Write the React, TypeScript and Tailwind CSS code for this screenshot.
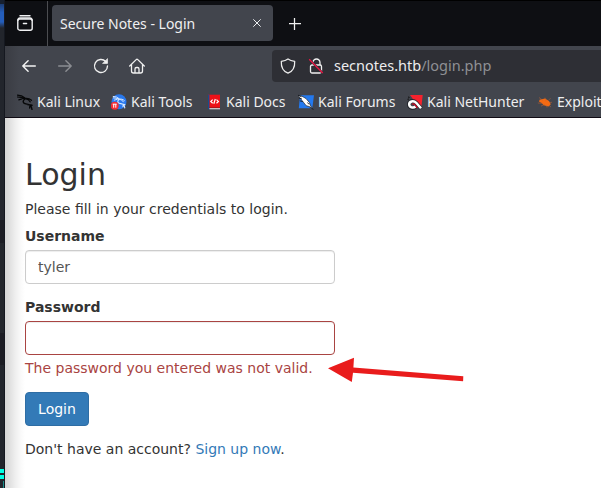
import type { ReactNode } from 'react';

function Dragon({ color }: { color: string }) {
  return (
    <g fill="none" stroke={color} strokeLinecap="round" strokeLinejoin="round">
      <path d="M.5 1.2 4.5 1.8 8 4M.5 3 4 3.3 7 4.6M1.8 5.8 5 4.9" strokeWidth="1.2" />
      <path d="M6 3.8 8 5C6.2 6 5.7 7.8 6.8 9c1.500 1.600 4.500.7 6.400 2.200 1.200 1 1.600 2.300 1.800 4.300M10.500 10.500l4.500.8M13 11.500l-.3 2.500" strokeWidth="1.4" />
      <path d="M8 4.500c2.200-.4 4.700.2 6.500 1.800M9 5c2 .3 3.300 1.300 4.200 2.900" strokeWidth="1.2" />
    </g>
  );
}

function IconBox({ children }: { children: ReactNode }) {
  return <svg className="h-4 w-4 shrink-0" viewBox="0 0 16 16">{children}</svg>;
}

const bookmarks = [
  { label: 'Kali Linux', width: 'w-[94px]', icon: <Dragon color="#060708" /> },
  {
    label: 'Kali Tools', width: 'w-[95px]', icon: (
      <>
        <circle cx="8" cy="7.800" r="7.500" fill="#2878ee" />
        <g transform="translate(1.8 1.5) scale(.8)"><Dragon color="#d6e8ff" /></g>
        <circle cx="3.700" cy="11.800" r="4" fill="#f42d35" />
        <path d="M1.700 10.200h4M2.700 10.200v3.500M4.800 10.200v3.500" stroke="#fff" strokeWidth="1" />
      </>
    ),
  },
  {
    label: 'Kali Docs', width: 'w-[92px]', icon: (
      <>
        <path d="M2 .7h12V14H2z" fill="#ed1118" />
        <path d="M2 .7h1.4v14.6H2z" fill="#174d8f" />
        <path d="M3.4 14H14v1.3H3.4z" fill="#d6dbe0" />
        <path d="M3.2 13.7H14" stroke="#8c151a" strokeWidth=".8" />
        <path d="M6.7 5.6 4.8 7.4l1.9 1.8M10.5 5.6l1.9 1.8-1.9 1.8M9.3 5 7.8 9.8" stroke="#fff" strokeWidth="1.2" fill="none" />
      </>
    ),
  },
  {
    label: 'Kali Forums', width: 'w-[109px]', icon: (
      <>
        <path d="M2 1.300h14l-1.700 13H.8z" fill="#2379ef" />
        <path d="M0 1.500 3.500 2 8 4.500l3.500 4.200.7 2.300 3 4.500-4.200-3-2.800-.8-4-5z" fill="#fff" stroke="#20252d" strokeWidth=".7" />
        <path d="m0 1.200 3.500 1.500M.8 4l3 .8M1.800 6.800l3 .8M9.500 8.500l1.400 1.800M12 12.500l3 3" stroke="#15191f" strokeWidth=".9" fill="none" />
      </>
    ),
  },
  {
    label: 'Kali NetHunter', width: 'w-[130px]', icon: (
      <>
        <path d="M3 1h12.700L14.500 12 8 8z" fill="#f5222d" />
        <path d="M14.2 14.5 9 8.500C6 5.5 1.500 7 1.700 10.700c.2 3.500 4.700 4.400 7 2" fill="none" stroke="#25282f" strokeWidth="3.800" />
        <path d="M14 14.300 9.200 8.800C6.500 6.100 2 7.300 2.200 10.500c.2 3 4 4 6.400 2.100" fill="none" stroke="#fff" strokeWidth="2.500" />
        <path d="M5 10.200q2.300-.8 3.500 1.200l1.800 2.400" stroke="#d5001d" strokeWidth="1.2" fill="none" />
        <path d="m1 3 1.6.4M.5 5.3 2 5" stroke="#111" />
      </>
    ),
  },
  {
    label: 'Exploit', width: 'w-[70px]', icon: (
      <>
        <path d="M2.500 5.800 8 4.500l4 2.400 1.800 3.300-2.300 2.300-4.800-1.300-2-2.200-2.600-1.300z" fill="#f36a12" />
        <path d="m2 3.500 4 3M.8 9l5 .4M4 12.200l4-2M8 3.700l1 4M12 5.800l1.500-1.500M13 8.500l2-.2M11.500 11l2.500 2M9.500 11l.5 2.500" stroke="#c9652e" strokeWidth=".5" />
      </>
    ),
  },
];

export default function App() {
  return (
    <div className="relative flex h-[488px] w-[601px] overflow-hidden bg-[#111317] font-['Noto_Sans',sans-serif]">
      <aside className="flex w-[5px] shrink-0 flex-col border-r border-[#151820] bg-[#22252c]">
        <div className="h-1 bg-[#17202f]" />
        <div className="h-[24px] bg-[linear-gradient(#1d3d73,#245dba_35%,#245dba_75%,#22252c)]" />
        <div className="h-[172px] bg-[#22252c]" />
        <div className="h-[20px] bg-[#24272e]" />
        <div className="h-[23px] bg-[#1c1d24]" />
        <div className="h-[90px] bg-[#23262c]" />
        <div className="h-[32px] bg-[#1b1c23]" />
        <div className="h-[104px] bg-[#22252c]" />
        <div className="h-1 w-1 bg-[#00ffe5]" />
        <div className="mt-[2px] h-1 w-1 bg-[#00ffe5]" />
        <div className="ml-[3px] mt-[2px] h-[7px] w-px bg-[#168c88]" />
      </aside>
      <section className="flex min-w-0 flex-1 flex-col">
        <div className="flex h-[46px] shrink-0 border-t border-black bg-[#0e0f13]">
          <div className="flex w-[43px] border-r border-[#4c4d51] pl-[12px] pt-[14px]">
            <svg className="h-4 w-4" viewBox="0 0 16 16" fill="none" stroke="#f0f1f3" strokeWidth="1.4" strokeLinecap="round">
              <path d="M3 .8h10" /><rect x=".8" y="4" width="14.4" height="11.2" rx="2" /><path d="M.8 5.3Q1.1 3 3 3h10q1.900 0 2.200 2.300M6.400 8.500h3.200" />
            </svg>
          </div>
          <div className="ml-1 mt-1 flex h-9 w-[221px] items-center justify-between rounded bg-[#42454d] pl-2 pr-3 text-[14px] text-[#f0f0f1]">
            <span className="whitespace-nowrap">Secure Notes - Login</span>
            <svg className="h-2 w-2" viewBox="0 0 8 8" stroke="#eceef0" strokeWidth="1"><path d="m.3.3 7.400 7.400M7.700.3.3 7.700" /></svg>
          </div>
          <svg className="ml-[16px] mt-[17px] h-3 w-3" viewBox="0 0 12 12" stroke="#f1f1f1" strokeWidth="1.25"><path d="M0 5.500h12M5.500 0v12" /></svg>
        </div>
        <div className="flex h-10 shrink-0 items-center bg-[linear-gradient(90deg,#3a3c43,#42454d_14px)] pl-[17px]">
          <svg className="h-[14px] w-[14px] shrink-0" viewBox="0 0 14 14" fill="none" stroke="#f4f4f4" strokeWidth="1.4" strokeLinecap="round" strokeLinejoin="round"><path d="M13.300 7H.8m5.300-5.300L.8 7l5.300 5.300" /></svg>
          <svg className="ml-[22px] h-[14px] w-[14px] shrink-0" viewBox="0 0 14 14" fill="none" stroke="#8b8d92" strokeWidth="1.4" strokeLinecap="round" strokeLinejoin="round"><path d="M.7 7h12.500M7.900 1.700 13.200 7l-5.300 5.300" /></svg>
          <svg className="ml-[21px] h-4 w-4 shrink-0" viewBox="0 0 16 16" fill="none" stroke="#f0f0f0" strokeWidth="1.35" strokeLinecap="round"><path d="M14.500 8A6.500 6.500 0 1 1 12.700 3.500" /><path d="M14.500 1v4.400h-4.600z" fill="#f0f0f0" strokeWidth=".7" strokeLinejoin="round" /></svg>
          <svg className="ml-[20px] h-4 w-4 shrink-0" viewBox="0 0 16 16" fill="none" stroke="#f0f0f0" strokeWidth="1.3" strokeLinecap="round" strokeLinejoin="round"><path d="m.7 8 6.500-6.400q.8-.8 1.600 0L15.300 8M2.500 6.800V13q0 2 2 2h7q2 0 2-2V6.800M6 14.800V11q0-1.500 1.500-1.500h1Q10 9.500 10 11v3.800" /></svg>
          <div className="ml-[127px] flex h-8 w-[340px] shrink-0 items-center rounded bg-[#2e2f35] pl-[8px] text-[14.500px]">
            <svg className="h-4 w-4" viewBox="0 0 16 16" fill="none" stroke="#eee" strokeWidth="1.25" strokeLinejoin="round"><path d="M8 .9c2 1.500 4.500 2.100 6.700 2.400C15 9.500 13 13.400 8 15.200 3 13.400 1 9.500 1.300 3.300 3.500 3 6 2.400 8 .9Z" /></svg>
            <svg className="ml-3 h-4 w-4" viewBox="0 0 16 16" fill="none" stroke="#f0f0f0" strokeWidth="1.3"><path d="M5 7V4.500a3.500 3.500 0 0 1 7 0V7" /><rect x="2.500" y="7" width="11" height="8" rx="1.500" /><path d="m1.200 1.300 13.500 13.800" stroke="#2e2f35" strokeWidth="2.200" /><path d="M1.200 1.300 14.700 15" stroke="#ed1744" /></svg>
            <span className="ml-[10px] whitespace-nowrap text-[#ededee]">secnotes.htb<span className="text-[#8f9094]">/login.php</span></span>
          </div>
        </div>
        <nav className="flex h-[32px] shrink-0 items-center overflow-hidden border-b border-[#100b14] bg-[linear-gradient(90deg,#3a3c43,#42454d_14px)] pl-3 text-[14px] text-[#eeeeef]">
          {bookmarks.map(b => <div key={b.label} className={`flex shrink-0 items-center gap-1 whitespace-nowrap ${b.width}`}><IconBox>{b.icon}</IconBox><span>{b.label}</span></div>)}
        </nav>
        <main className="flex-1 bg-white bg-[linear-gradient(90deg,#d6d6d6_0px,#dedede_4px,#eeeeee_10px,#fafafa_16px,#ffffff_20px)] pl-5 pt-[40px] font-['DejaVu_Sans',sans-serif] text-[14px] leading-[20px] text-[#333]">
          <h2 className="h-[33px] text-[30px] leading-[33px]">Login</h2>
          <p className="mt-[8px]">Please fill in your credentials to login.</p>
          <label htmlFor="username" className="mt-[7px] block font-bold">Username</label>
          <input id="username" defaultValue="tyler" className="mt-1 block h-[34px] w-[310px] rounded border border-[#ccc] bg-white px-3 text-[14px] text-[#555] shadow-[inset_0_1px_1px_rgba(0,0,0,.075)]" />
          <label htmlFor="password" className="mt-[13px] block font-bold">Password</label>
          <input id="password" type="password" className="mt-1 block h-[34px] w-[310px] rounded border border-[#a94442] bg-white shadow-[inset_0_1px_1px_rgba(0,0,0,.075)]" />
          <p className="mt-[3px] text-[#a94442]">The password you entered was not valid.</p>
          <button className="mt-[14px] block h-[34px] w-[64px] rounded border border-[#2e6da4] bg-[#337ab7] text-white">Login</button>
          <p className="mt-[13px]">Don't have an account? <a className="text-[#337ab7]" href="#">Sign up now</a>.</p>
        </main>
      </section>
      <svg className="absolute left-[328px] top-[357px] h-[26px] w-[136px]" viewBox="0 0 136 26"><path d="M0 11.300 26 .7l-.6 9.800 109.900 8.700-.2 5.100L25 15.700l-1.200 9.400Z" fill="#e91c1c" /></svg>
    </div>
  );
}
